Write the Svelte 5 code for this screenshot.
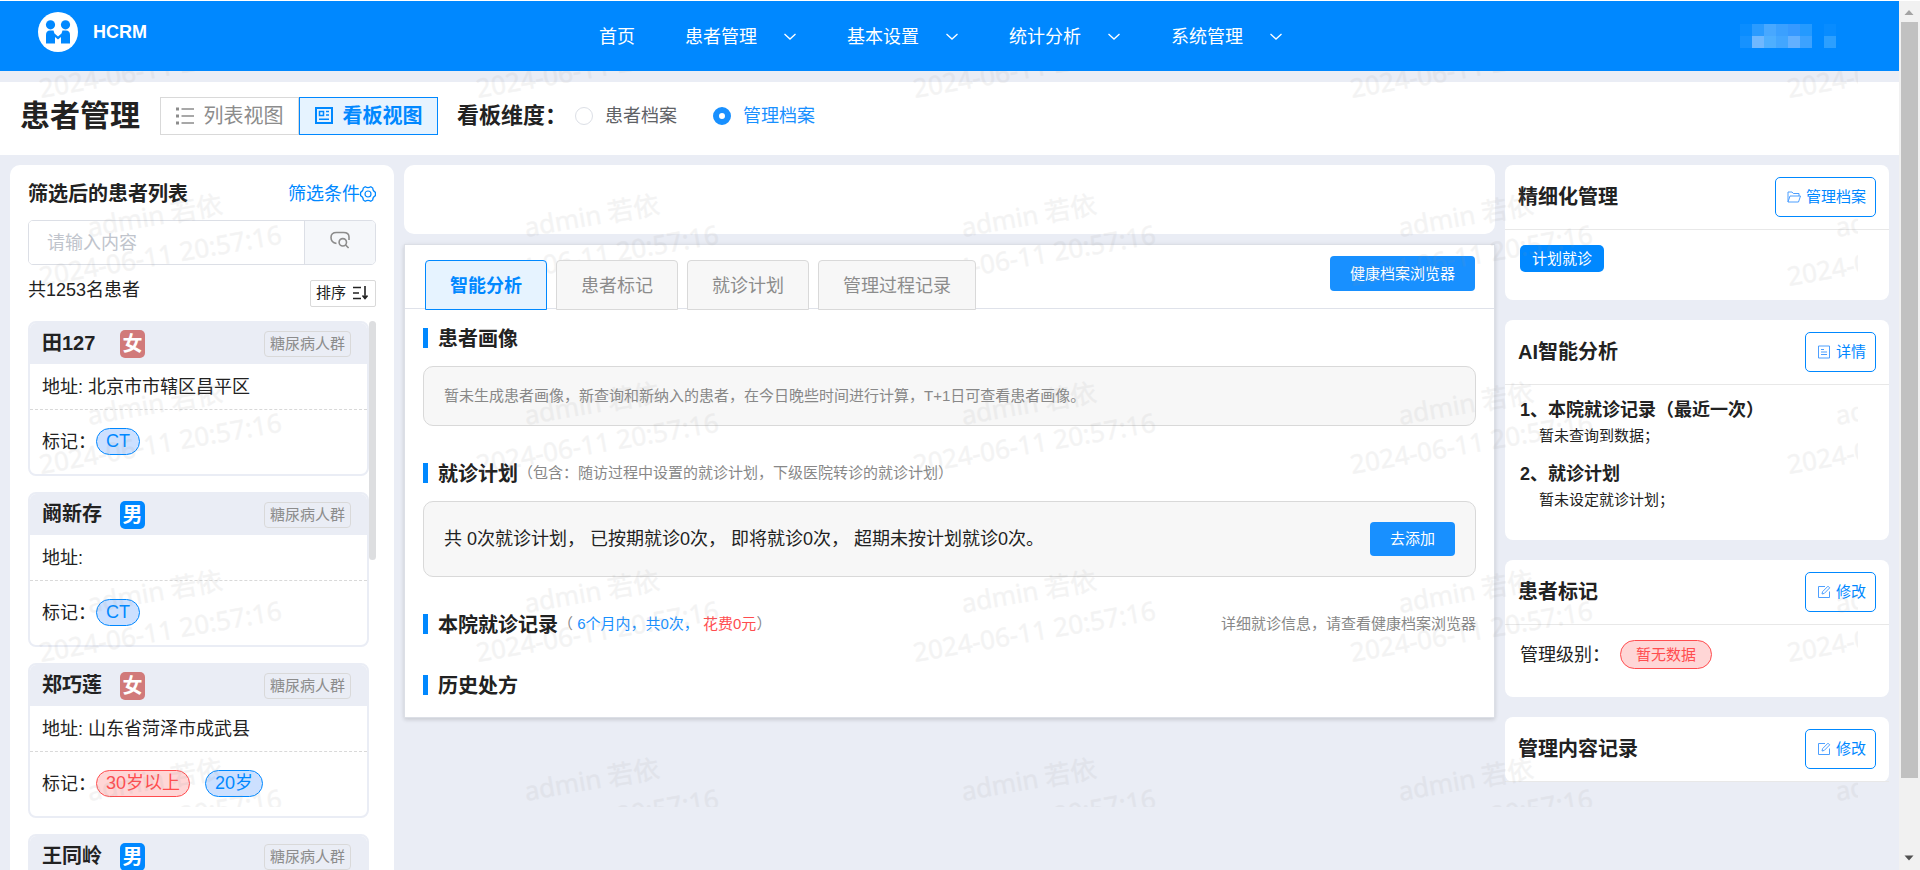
<script>
  const menus = ['患者管理', '基本设置', '统计分析', '系统管理'];
  const tabs = ['智能分析', '患者标记', '就诊计划', '管理过程记录'];
  const patients = [
    { name: '田127', sex: '女', address: '北京市市辖区昌平区', marks: [{ text: 'CT', tone: 'blue' }] },
    { name: '阚新存', sex: '男', address: '', marks: [{ text: 'CT', tone: 'blue' }] },
    {
      name: '郑巧莲', sex: '女', address: '山东省菏泽市成武县',
      marks: [{ text: '30岁以上', tone: 'red' }, { text: '20岁', tone: 'blue' }]
    },
    { name: '王同岭', sex: '男' }
  ];
  const cols = [0, 1, 2, 3, 4];
  const rows = [0, 1, 2, 3, 4];
  const mosaic = [
    [0, 0, '#0a8dff'], [1, 0, '#2a9bff'], [2, 0, '#48a8ff'], [3, 0, '#3ba0ff'], [4, 0, '#3799ff'], [5, 0, '#249aff'], [7, 0, '#088cff'],
    [0, 1, '#1692ff'], [1, 1, '#6fb8ff'], [2, 1, '#4eafff'], [3, 1, '#42a6ff'], [4, 1, '#63b0ff'], [5, 1, '#3ca2ff'], [7, 1, '#2c9fff']
  ];

  let active = $state('智能分析');
  let dimension = $state('manage');
  let keyword = $state('');
</script>

{#snippet editIcon()}
  <svg class="ico" viewBox="0 0 14 14" aria-hidden="true">
    <path d="M8 1.500H1.500v11h11V6.500" />
    <path d="M5 9l.6-2.400 5.400-5.400 1.700 1.700L7.300 8.400z" />
  </svg>
{/snippet}

<div class="shell">
  <div class="page">
    <header class="top">
      <div class="brand">
        <svg class="logo" viewBox="0 0 40 40" aria-hidden="true">
          <circle cx="20" cy="20" r="20" fill="#fff" />
          <circle cx="12.500" cy="12.800" r="4.600" fill="#08f" />
          <circle cx="27.500" cy="12.800" r="4.600" fill="#08f" />
          <path d="M8 31.500V23q0-4.500 4-4.500h3.500l1 3 3.500 3 3.500-3 1-3H28q4 0 4 4.500v8.500h-9v-6.500l-3 2.500-3-2.500v6.500z" fill="#08f" />
        </svg>
        <span>HCRM</span>
      </div>
      <nav>
        <a href="#home">首页</a>
        {#each menus as m}
          <a href="#menu">{m}
            <svg viewBox="0 0 14 14" aria-hidden="true"><path d="M1.500 4l5.500 5 5.500-5" /></svg>
          </a>
        {/each}
      </nav>
      <svg class="user" viewBox="0 0 96 24" aria-hidden="true">
        {#each mosaic as [x, y, c]}
          <rect x={x * 12} y={y * 12} width="12" height="12" fill={c} />
        {/each}
      </svg>
    </header>

    <section class="titlebar">
      <h1>患者管理</h1>
      <div class="views">
        <button type="button">
          <svg viewBox="0 0 18 18" aria-hidden="true">
            <path d="M5.500 2H18M5.500 9H18M5.500 16H18" stroke="currentColor" stroke-width="1.500" />
            <path d="M0 .5h3v3H0zM0 7.500h3v3H0zM0 14.500h3v3H0z" fill="currentColor" />
          </svg>
          列表视图
        </button>
        <button type="button" class="on">
          <svg viewBox="0 0 18 18" aria-hidden="true">
            <rect x="1" y="1" width="16" height="15" fill="none" stroke="currentColor" stroke-width="2" />
            <rect x="4.500" y="4.500" width="4" height="4" fill="none" stroke="currentColor" stroke-width="1.500" />
            <path d="M11 4.500h3M11 8h3M4 12.300h10" stroke="currentColor" stroke-width="1.500" />
          </svg>
          看板视图
        </button>
      </div>
      <strong class="dim">看板维度：</strong>
      <label class:picked={dimension === 'patient'}><input type="radio" name="dim" value="patient" bind:group={dimension} />患者档案</label>
      <label class:picked={dimension === 'manage'}><input type="radio" name="dim" value="manage" bind:group={dimension} />管理档案</label>
    </section>

    <main>
      <aside class="left">
        <div class="between">
          <h2>筛选后的患者列表</h2>
          <a class="filter" href="#filter">筛选条件<svg viewBox="0 0 16 16" aria-hidden="true">
            <path d="M5.200.8Q8 2.400 10.800.8L12.700 2q0 3 2.700 4.400v3.200Q12.700 11 12.700 14l-1.900 1.200Q8 13.600 5.200 15.200L3.300 14Q3.300 11 .6 9.600V6.400Q3.300 5 3.300 2z" />
            <circle cx="8" cy="8" r="3" />
          </svg></a>
        </div>
        <div class="search">
          <input type="text" placeholder="请输入内容" aria-label="请输入内容" bind:value={keyword} />
          <button type="button" aria-label="搜索">
            <svg viewBox="0 0 20 18" aria-hidden="true">
              <path d="M6.500 12.500Q1 11.500 1 6.500 1 1.500 6.500 1.500h7Q19 1.500 19 6v3" />
              <circle cx="12.800" cy="11.300" r="3.700" />
              <path d="M15.600 14l3 3" />
            </svg>
          </button>
        </div>
        <div class="between count">
          <span>共1253名患者</span>
          <button type="button" class="sort">排序
            <svg viewBox="0 0 16 14" aria-hidden="true"><path d="M1 1.500h8M1 7h6M1 12.500h8M13 0v12.500M10.500 9.500l2.500 3 2.500-3" /></svg>
          </button>
        </div>
        <div class="scroller">
          <ul>
            {#each patients as p}
              <li>
                <div class="phead">
                  <strong>{p.name}</strong>
                  <b class="sex" class:female={p.sex === '女'}>{p.sex}</b>
                  <span class="group">糖尿病人群</span>
                </div>
                {#if p.marks}
                  <div class="addr">地址: {p.address}</div>
                  <div class="marks">
                    <span>标记：</span>
                    {#each p.marks as m}<span class="pill {m.tone}">{m.text}</span>{/each}
                  </div>
                {/if}
              </li>
            {/each}
          </ul>
          <div class="thumb"></div>
        </div>
      </aside>

      <div class="center">
        <div class="blank"></div>
        <section class="work">
          <div class="tabs">
            <div class="tablist" role="tablist">
              {#each tabs as t}
                <button type="button" role="tab" aria-selected={active === t} class:on={active === t} onclick={() => (active = t)}>{t}</button>
              {/each}
            </div>
            <button type="button" class="primary browser">健康档案浏览器</button>
          </div>
          <div class="body">
            <div class="sec"><h3>患者画像</h3></div>
            <div class="box small">暂未生成患者画像，新查询和新纳入的患者，在今日晚些时间进行计算，T+1日可查看患者画像。</div>
            <div class="sec"><h3>就诊计划</h3><span>（包含：随访过程中设置的就诊计划，下级医院转诊的就诊计划）</span></div>
            <div class="box plan">
              <span>共 0次就诊计划， 已按期就诊0次， 即将就诊0次， 超期未按计划就诊0次。</span>
              <button type="button" class="primary">去添加</button>
            </div>
            <div class="sec visits">
              <h3>本院就诊记录</h3>
              <span>（ <i class="b">6个月内，共0次，</i> <i class="r">花费0元</i>）</span>
              <span class="hint">详细就诊信息，请查看健康档案浏览器</span>
            </div>
            <div class="sec last"><h3>历史处方</h3></div>
          </div>
        </section>
      </div>

      <aside class="right">
        <section class="fine">
          <header><h2>精细化管理</h2>
            <button type="button">
              <svg class="ico" viewBox="0 0 14 14" aria-hidden="true"><path d="M1 12V2h4l1.300 1.500H12V6M1 12l2-6h10.500l-2 6z" /></svg>管理档案
            </button>
          </header>
          <div class="in"><span class="tag">计划就诊</span></div>
        </section>
        <section class="ai">
          <header><h2>AI智能分析</h2>
            <button type="button">
              <svg class="ico" viewBox="0 0 14 14" aria-hidden="true"><path d="M1.500 1h11v12h-11zM4 4.500h3M4 7h6M4 9.500h6" /></svg>详情
            </button>
          </header>
          <div class="in">
            <h4>1、本院就诊记录（最近一次）</h4>
            <p>暂未查询到数据；</p>
            <h4>2、就诊计划</h4>
            <p>暂未设定就诊计划；</p>
          </div>
        </section>
        <section class="mark">
          <header><h2>患者标记</h2><button type="button">{@render editIcon()}修改</button></header>
          <div class="in"><span>管理级别：</span><span class="none">暂无数据</span></div>
        </section>
        <section>
          <header><h2>管理内容记录</h2><button type="button">{@render editIcon()}修改</button></header>
        </section>
      </aside>
    </main>

    <svg class="watermark" aria-hidden="true">
      {#each rows as r}
        {#each cols as c}
          <g transform="translate({41 + c * 437} {98 + r * 188}) rotate(-10)">
            {#if r > 0}<text x="56" y="-40">admin 若依</text>{/if}
            <text x="0" y="0">2024-06-11 20:57:16</text>
          </g>
        {/each}
      {/each}
    </svg>
  </div>

  <div class="bar" aria-hidden="true">
    <svg viewBox="0 0 21 21"><path d="M5.500 14l4.500-5 4.500 5z" fill="#a3a3a3" /></svg>
    <div class="grip"></div>
    <svg viewBox="0 0 21 21"><path d="M5.500 6.500h9l-4.500 5z" fill="#505050" /></svg>
  </div>
</div>

<style>
  :global(body) {
    font-family: 'Liberation Sans', 'Noto Sans CJK SC', sans-serif;
    font-size: 18px;
    line-height: 24px;
    color: #222;
    overflow: hidden;
  }
  h1, h2, h3, h4, p, ul { margin: 0; padding: 0; }
  button, input { font: inherit; color: inherit; box-sizing: border-box; margin: 0; }
  button { cursor: pointer; padding: 0; white-space: nowrap; }
  a { text-decoration: none; color: inherit; }
  svg { flex: none; }

  .shell { display: grid; grid-template-columns: minmax(0, 1fr) 21px; height: 100vh; padding-top: 1px; box-sizing: border-box; overflow: hidden; }
  .page { position: relative; background: #eaedf5; overflow: hidden; min-height: 0; }

  .top {
    position: relative; z-index: 3; height: 70px; background: #08f; color: #fff; padding-right: 17px;
    display: grid; grid-template-columns: 1fr auto 1fr; align-items: center;
  }
  .brand { display: flex; align-items: center; gap: 15px; padding: 0 0 8px 38px; font-weight: bold; }
  .logo { width: 40px; height: 40px; }
  nav { display: flex; padding-top: 2px; }
  nav a { display: flex; align-items: center; gap: 26px; padding: 0 25px; white-space: nowrap; }
  nav svg { width: 14px; height: 14px; fill: none; stroke: #fff; stroke-width: 1.300; }
  .user { width: 96px; height: 24px; justify-self: end; margin-right: 46px; }

  .titlebar {
    display: flex; align-items: center; margin-top: 11px; padding: 0 20px 6px; height: 73px;
    background: #fff; white-space: nowrap; box-sizing: border-box;
  }
  h1 { font-size: 30px; line-height: 36px; margin-right: 20px; }
  .views { display: flex; }
  .views button {
    display: flex; align-items: center; justify-content: center; gap: 10px; width: 139px; height: 38px;
    font-size: 20px; background: #fff; border: 1px solid #d9d9d9; color: #8c8c8c;
  }
  .views button.on { background: #e6f3ff; border-color: #08f; color: #08f; font-weight: bold; }
  .views svg { width: 18px; height: 18px; }
  .dim { font-size: 22px; margin-left: 19px; margin-right: 8px; }
  .titlebar label { display: flex; align-items: center; gap: 12px; margin-right: 36px; color: #606266; }
  .titlebar label.picked { color: #1890ff; }
  input[type='radio'] { appearance: none; width: 18px; height: 18px; border: 1px solid #dcdfe6; border-radius: 50%; background: #fff; }
  input[type='radio']:checked { border: 6px solid #1890ff; }

  main { display: grid; grid-template-columns: 384px minmax(0, 1fr) 384px; gap: 10px; padding: 10px; align-items: start; }

  .left { background: #fff; border-radius: 10px; padding: 17px 18px 18px; box-sizing: border-box; }
  .between { display: flex; justify-content: space-between; align-items: center; }
  h2 { font-size: 20px; line-height: 24px; white-space: nowrap; }
  .filter { color: #08f; display: flex; align-items: center; }
  .filter svg { width: 16px; height: 16px; fill: none; stroke: #08f; stroke-width: 1.200; }
  .search { display: flex; height: 45px; margin-top: 14px; border: 1px solid #dcdfe6; border-radius: 5px; box-sizing: border-box; overflow: hidden; }
  .search input { flex: 1; min-width: 0; border: 0; padding: 0 18px; outline: none; background: #fff; }
  .search input::placeholder { color: #c0c4cc; opacity: 1; }
  .search button { width: 71px; border: 0; border-left: 1px solid #dcdfe6; background: #f5f7fa; }
  .search svg { width: 20px; height: 18px; fill: none; stroke: #8c8c8c; stroke-width: 1.600; }
  .count { margin-top: 15px; align-items: flex-start; line-height: 20px; }
  .sort { display: flex; align-items: center; gap: 6px; width: 66px; height: 27px; padding: 0 0 1px 5px; font-size: 15px; background: #fff; border: 1px solid #d9d9d9; border-radius: 2px; }
  .sort svg { width: 16px; height: 14px; fill: none; stroke: #222; stroke-width: 1.600; }

  .scroller { display: flex; margin-top: 14px; }
  ul { flex: 1; list-style: none; display: grid; gap: 16px; }
  .thumb { width: 7px; height: 239px; border-radius: 4px; background: #dddee0; }
  li { height: 155px; border: 2px solid #eaedf5; border-radius: 8px; box-sizing: border-box; overflow: hidden; }
  .phead { display: flex; align-items: center; height: 41px; padding: 0 16px 0 12px; background: #eaedf5; box-sizing: border-box; }
  .phead strong { width: 78px; font-size: 20px; padding-bottom: 2px; }
  .sex { width: 25px; height: 28px; border-radius: 5px; background: #08f; color: #fff; font-size: 20px; line-height: 28px; text-align: center; }
  .sex.female { background: #d17a7a; }
  .group { margin-left: auto; padding: 0 5px; border: 1px solid #d9d9d9; border-radius: 4px; font-size: 15px; color: #8c8c8c; }
  .addr { height: 43px; line-height: 43px; padding: 2px 12px 0; border-bottom: 1px dashed #d9d9d9; }
  .marks { display: flex; align-items: center; height: 63px; padding: 0 12px; }
  .pill { height: 27px; line-height: 25px; padding: 0 9px; margin-right: 15px; border: 1px solid; border-radius: 14px; box-sizing: border-box; }
  .pill.blue { background: #cce0ff; color: #08f; }
  .pill.red { background: #ffd6d6; color: #ff4d4f; }

  .blank { height: 69px; background: #fff; border-radius: 10px; }
  .work { margin-top: 10px; background: #fff; border: 1px solid #dcdfe6; box-shadow: 0 2px 4px rgba(0, 0, 0, .12), 0 0 6px rgba(0, 0, 0, .04); }
  .tabs { display: flex; justify-content: space-between; align-items: flex-start; height: 63px; padding: 0 19px 0 20px; border-bottom: 1px solid #dfe2ea; }
  .tablist { position: relative; z-index: 2; display: flex; gap: 9px; padding-top: 15px; }
  .tablist button { height: 50px; padding: 2px 24px 0; border: 1px solid #d9d9d9; border-radius: 4px 4px 0 0; background: #f7f7f7; color: #8c8c8c; }
  .tablist button.on { background: #e6f3ff; border-color: #08f; color: #08f; font-weight: bold; }
  .primary { height: 34px; padding: 0 20px; border: 0; border-radius: 4px; background: #1890ff; color: #fff; font-size: 15px; }
  .browser { margin-top: 11px; height: 35px; }
  .body { padding: 14px 18px 17px; }
  .sec { display: flex; align-items: center; height: 30px; font-size: 15px; color: #888; white-space: nowrap; }
  h3 { display: flex; align-items: center; gap: 10px; padding-top: 2px; font-size: 20px; line-height: 24px; color: #222; }
  h3::before { content: ''; width: 5px; height: 20px; margin-bottom: 2px; background: #08f; }
  i { font-style: normal; }
  .b { color: #1890ff; }
  .r { color: #ff4d4f; }
  .hint { margin-left: auto; }
  .box { margin: 13px 0 32px; display: flex; align-items: center; justify-content: space-between; height: 60px; padding: 0 20px; border: 1px solid #d9d9d9; border-radius: 10px; background: #f7f7f7; box-sizing: border-box; }
  .small { font-size: 15px; color: #888; }
  .plan { height: 76px; }
  .last { margin-top: 31px; }

  .right { display: grid; gap: 20px; }
  .right section { background: #fff; border-radius: 8px; box-sizing: border-box; }
  .right header { display: flex; align-items: center; justify-content: space-between; height: 64px; padding: 0 13px; border-bottom: 1px solid #e8e8e8; }
  .right header button { display: flex; align-items: center; gap: 5px; height: 40px; padding: 0 9px 0 11px; border: 1px solid #08f; border-radius: 5px; background: #fff; color: #08f; font-size: 15px; }
  .ico { width: 14px; height: 14px; fill: none; stroke: #4d9fff; stroke-width: 1; }
  .in { padding: 15px; }
  .fine { height: 135px; }
  .tag { display: inline-block; height: 27px; line-height: 27px; padding: 0 12px; border-radius: 5px; background: #08f; color: #fff; font-size: 15px; }
  .ai { height: 220px; }
  .ai .in { padding-top: 12px; }
  h4 { font-size: 18px; line-height: 26px; }
  .in p { margin: 0 0 12px 19px; font-size: 15px; line-height: 26px; }
  .mark { height: 137px; }
  .mark .in { display: flex; align-items: center; gap: 10px; }
  .none { height: 29px; line-height: 28px; padding: 0 15px; border: 1px solid #ff4d4f; border-radius: 15px; box-sizing: border-box; background: #ffd6d6; color: #ff4d4f; font-size: 15px; }

  .watermark { position: absolute; z-index: 1; top: -1px; left: 0; width: calc(100% - 41px); height: calc(100% - 62px); overflow: hidden; pointer-events: none; opacity: .1; }
  .watermark text { font-family: 'Noto Sans', 'Noto Sans CJK SC', sans-serif; font-size: 26px; fill: #969696; stroke: #969696; stroke-width: .5; }

  .bar { display: flex; flex-direction: column; background: #f1f1f1; min-height: 0; }
  .bar svg { width: 21px; height: 21px; }
  .bar svg:last-child { margin-top: auto; }
  .grip { height: 87%; margin: 0 2px; background: #c1c1c1; }
</style>
